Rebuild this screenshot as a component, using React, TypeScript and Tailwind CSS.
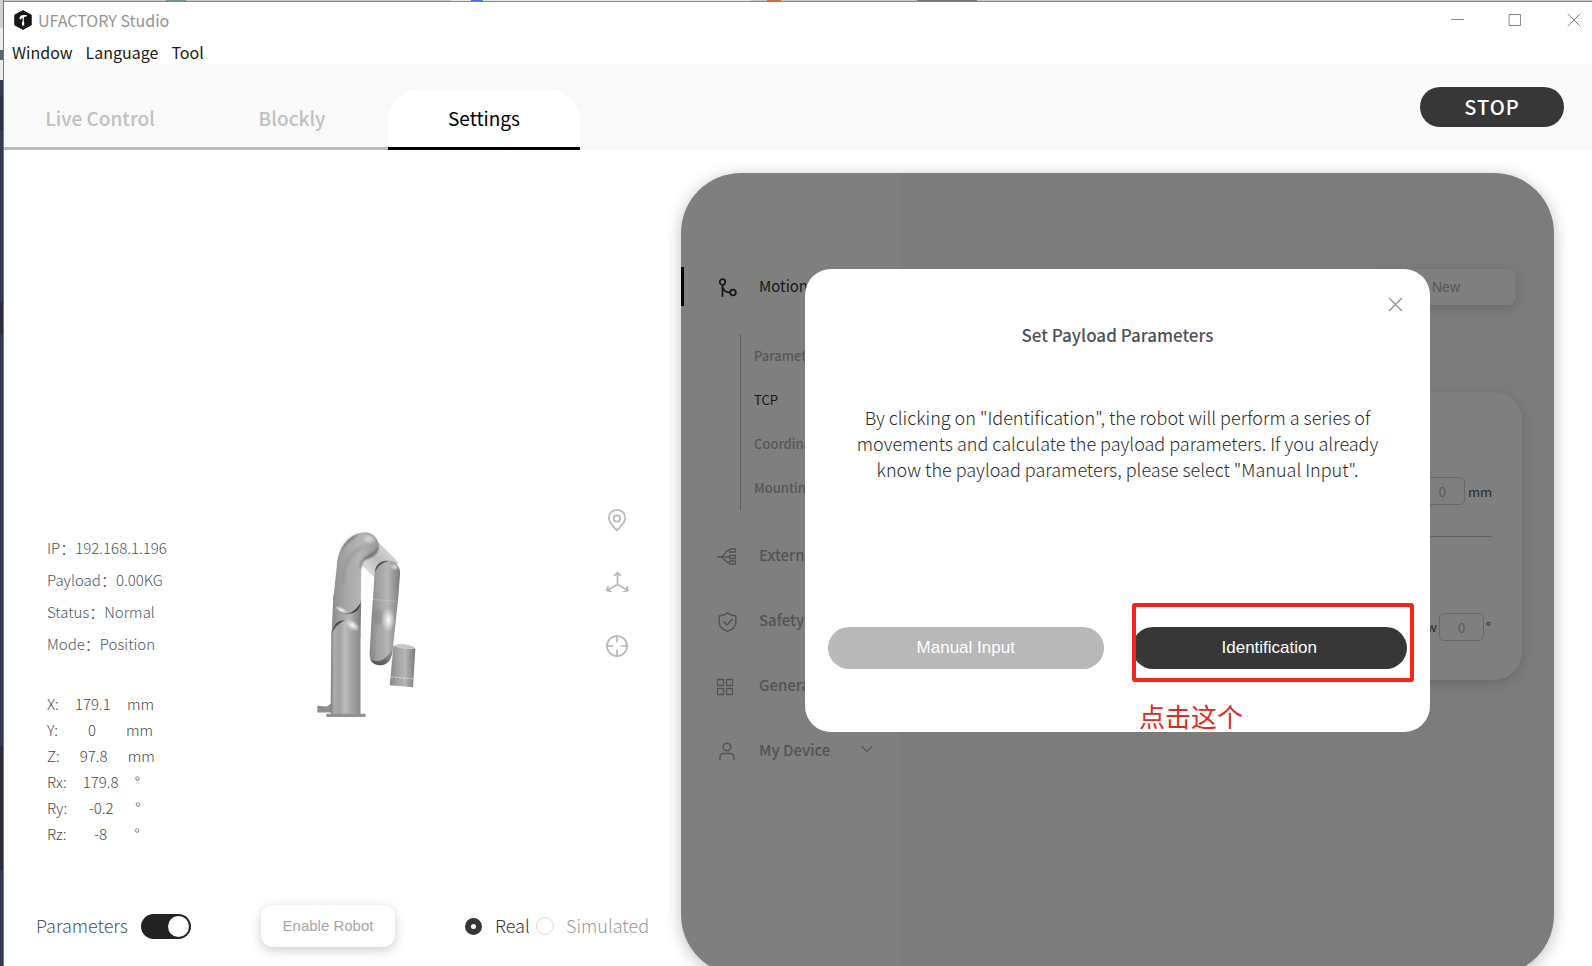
import type { ReactNode } from 'react';

const tabs = ['Live Control', 'Blockly'];

const status = ['IP：192.168.1.196', 'Payload：0.00KG', 'Status：Normal', 'Mode：Position'];

const pose = [
  { name: 'X:', value: '179.1', unit: 'mm' },
  { name: 'Y:', value: '0', unit: 'mm' },
  { name: 'Z:', value: '97.8', unit: 'mm' },
  { name: 'Rx:', value: '179.8', unit: '°' },
  { name: 'Ry:', value: '-0.2', unit: '°' },
  { name: 'Rz:', value: '-8', unit: '°' },
];

const motionItems = ['Parameters', 'TCP', 'Coordinate', 'Mounting'];

function Logo() {
  return (
    <svg width="20" height="20" viewBox="0 0 20 20" aria-hidden="true">
      <path d="M10 0.6 L18.2 5 V15 L10 19.4 L1.8 15 V5 Z" fill="#151515" stroke="#151515" strokeLinejoin="round" />
      <path d="M13.8 5 H10.6 C8 5 6.4 6.400 6.4 8.800 L8 9.600 C8.200 8.600 8.800 8 9.600 8 V11.600 L9 12.600 V15.400 H11.200 V12.600 L10.800 11.600 V8 C11 7 12 6.600 13.800 6.600 Z" fill="#fff" />
    </svg>
  );
}

function RobotArm() {
  return (
    <svg width="101" height="188" viewBox="108 93 304 564" role="img" aria-label="Robot arm">
      <defs>
        <linearGradient id="base" x1="0" x2="1">
          <stop offset="0" stopColor="#7d7d7d" />
          <stop offset="0.12" stopColor="#acacac" />
          <stop offset="0.3" stopColor="#a2a2a2" />
          <stop offset="0.48" stopColor="#bcbcbc" />
          <stop offset="0.7" stopColor="#a6a6a6" />
          <stop offset="1" stopColor="#868686" />
        </linearGradient>
        <linearGradient id="tube" x1="0" x2="1">
          <stop offset="0" stopColor="#858585" />
          <stop offset="0.3" stopColor="#a3a3a3" />
          <stop offset="0.6" stopColor="#b6b6b6" />
          <stop offset="1" stopColor="#7a7a7a" />
        </linearGradient>
        <linearGradient id="upper" x1="0" x2="1">
          <stop offset="0" stopColor="#909090" />
          <stop offset="0.3" stopColor="#a8a8a8" />
          <stop offset="0.6" stopColor="#b4b4b4" />
          <stop offset="1" stopColor="#969696" />
        </linearGradient>
        <linearGradient id="link" x1="0" y1="1" x2="1" y2="0">
          <stop offset="0" stopColor="#eeeeee" />
          <stop offset="0.5" stopColor="#bcbcbc" />
          <stop offset="1" stopColor="#ececec" />
        </linearGradient>
        <linearGradient id="under" x1="0" y1="0" x2="0" y2="1">
          <stop offset="0" stopColor="#555" stopOpacity="0" />
          <stop offset="1" stopColor="#3c3c3c" stopOpacity="0.8" />
        </linearGradient>
        <radialGradient id="shine">
          <stop offset="0" stopColor="#fff" stopOpacity="0.95" />
          <stop offset="1" stopColor="#fff" stopOpacity="0" />
        </radialGradient>
        <filter id="soft" x="-30%" y="-30%" width="160%" height="160%">
          <feGaussianBlur stdDeviation="4" />
        </filter>
      </defs>
      <path d="M240 190 L296 126 L356 186 L340 220 L288 236 Z" fill="url(#link)" />
      <path d="M112 618 L140 620 L156 610 V638 H112 Z" fill="#8f8f8f" />
      <path d="M160 285 L244 300 L242 410 L155 410 Z" fill="url(#tube)" />
      <path d="M154 400 C156 372 172 360 194 360 C220 360 240 380 242 404 V645 H152 Z" fill="url(#base)" />
      <path d="M156 398 C160 370 178 360 196 361 C180 368 168 378 156 398 Z" fill="#4c4c4c" />
      <ellipse cx="218" cy="376" rx="26" ry="14" fill="url(#shine)" transform="rotate(35 218 376)" />
      <path d="M139 642 H257 V652 H139 Z" fill="#929292" />
      <path d="M160 300 L172 184 C178 136 216 96 258 96 C280 97 297 116 297 138 C297 164 274 174 258 178 C248 182 245 200 244 220 L243 310 C238 330 224 342 204 342 L160 330 Z" fill="url(#upper)" />
      <path d="M188 250 C188 200 208 160 250 140" stroke="#8c8c8c" strokeWidth="10" fill="none" opacity="0.4" filter="url(#soft)" />
      <ellipse cx="268" cy="116" rx="24" ry="18" fill="url(#shine)" opacity="0.6" />
      <path d="M243 308 C240 330 224 342 204 341 C220 336 230 326 243 308 Z" fill="#404040" />
      <path d="M297 136 C297 166 268 172 250 182 C244 190 246 200 240 206 C240 184 250 174 262 166 C276 160 290 152 297 136 Z" fill="#505050" opacity="0.6" filter="url(#soft)" />
      <path d="M180 154 C190 126 214 104 238 100 C220 116 202 126 180 154 Z" fill="#5c5c5c" opacity="0.6" filter="url(#soft)" />
      <path d="M162 318 C176 336 192 342 206 341" stroke="#6c6c6c" strokeWidth="3" fill="none" />
      <ellipse cx="184" cy="330" rx="24" ry="9" fill="url(#shine)" transform="rotate(25 184 330)" />
      <path d="M285 215 C287 192 302 181 324 181 C346 182 362 196 361 220 L355 300 L346 380 L338 460 C332 486 320 497 300 496 C276 494 266 476 270 450 L276 340 L280 290 Z" fill="url(#tube)" />
      <path d="M285 216 C288 192 304 181 326 182 C306 188 294 198 285 216 Z" fill="#555" />
      <ellipse cx="345" cy="200" rx="16" ry="12" fill="url(#shine)" opacity="0.7" />
      <path d="M280 298 L355 304" stroke="#d8d8d8" strokeWidth="2" strokeDasharray="5 5" />
      <ellipse cx="294" cy="350" rx="14" ry="26" fill="#6c6c6c" opacity="0.25" filter="url(#soft)" />
      <ellipse cx="326" cy="360" rx="20" ry="36" fill="url(#shine)" />
      <path d="M340 440 C336 482 322 497 300 496 C286 496 276 490 270 478 C300 492 320 480 340 440 Z" fill="url(#under)" />
      <path d="M341 438 C360 430 396 434 407 446 L400 562 L330 556 Z" fill="url(#tube)" />
      <path d="M341 438 C360 430 396 434 407 446 C390 450 360 446 341 438 Z" fill="#c8c8c8" />
      <path d="M333 531 L403 537" stroke="#f4f4f4" strokeWidth="2" strokeDasharray="8 4" />
    </svg>
  );
}

function Glyph({ size = 24, width = 1, children }: { size?: number; width?: number; children: ReactNode }) {
  return (
    <svg width={size} height={size} viewBox={`0 0 ${size} ${size}`} fill="none" stroke="currentColor" strokeWidth={width} strokeLinecap="round" strokeLinejoin="round" aria-hidden="true">
      {children}
    </svg>
  );
}

function MenuItem({ icon, label, children }: { icon: ReactNode; label: string; children?: ReactNode }) {
  return (
    <button className="flex h-[65px] w-full items-center pt-[2px] pl-[34px] text-left text-[15px] font-medium text-[#a8a8a8]">
      <span className="mt-[2px] w-11">{icon}</span>
      <span className="w-[101px]">{label}</span>
      {children}
    </button>
  );
}

function RobotView() {
  return (
    <section className="flex flex-col justify-end pb-[19px]">
      <div className="flex items-end pb-[58px] pl-[43px]">
        <div className="w-[269px] text-[15px] font-light">
          <ul className="mb-[31px] text-[#4a5866]">
            {status.map((line) => (
              <li key={line} className="h-8 leading-8">{line}</li>
            ))}
          </ul>
          <ul className="text-[#4a4a4a]">
            {pose.map((row) => (
              <li key={row.name} className="flex h-[26px] leading-[26px]">
                <span>{row.name}</span>
                <span className="w-[68px] text-center">{row.value}</span>
                <span>{row.unit}</span>
              </li>
            ))}
          </ul>
        </div>
        <div className="mb-[128px]">
          <RobotArm />
        </div>
        <div className="mr-[52px] mb-[189px] ml-auto flex flex-col gap-[39px] text-[#b8b8b8]">
          <button aria-label="Position view">
            <Glyph width={1.7}>
              <path d="M12 22.5 C8 18 3.8 14.5 3.8 10 A8.2 8.2 0 0 1 20.2 10 C20.2 14.5 16 18 12 22.5 Z" />
              <circle cx="12" cy="10.5" r="3.2" />
            </Glyph>
          </button>
          <button aria-label="Axes view">
            <Glyph width={1.7}>
              <path d="M12.5 13.5 V1.5 M9.5 4.5 L12.5 1.5 L15.5 4.5 M12.5 13.5 L2 19.5 M3 15.5 L2 19.5 L6 20.5 M12.5 13.5 L23 19.5 M22 15.5 L23 19.5 L19 20.5" />
            </Glyph>
          </button>
          <button aria-label="Center view">
            <Glyph width={1.7}>
              <circle cx="12" cy="12" r="10" />
              <path d="M12 2 V7.5 M12 16.5 V22 M2 12 H7.5 M16.5 12 H22" />
            </Glyph>
          </button>
        </div>
      </div>
      <div className="flex h-[42px] items-center pl-8 text-lg font-light text-[#4a5866]">
        <label htmlFor="parameters" className="w-[105px] pb-[3px]">Parameters</label>
        <input
          id="parameters"
          type="checkbox"
          defaultChecked
          className="flex h-[25px] w-[50px] appearance-none items-center rounded-full bg-[#232323] px-[2px] before:size-[21px] before:rounded-full before:bg-white checked:justify-end"
        />
        <button className="ml-[70px] h-[42px] w-[134px] rounded-xl bg-white font-['Liberation_Sans',sans-serif] text-[15px] font-normal text-[#a6a6a6] shadow-[0_3px_12px_rgba(0,0,0,0.2)]">
          Enable Robot
        </button>
        <label className="ml-[70px] flex w-[71px] items-center gap-[13px] text-[#333]">
          <input type="radio" name="mode" defaultChecked className="size-[17px] appearance-none rounded-full border-[6px] border-[#363636] bg-white" />
          <span className="pb-[3px]">Real</span>
        </label>
        <label className="flex items-center gap-3 text-[#999]">
          <input type="radio" name="mode" className="size-[18px] appearance-none rounded-full border border-[#ddd] bg-white" />
          <span className="pb-[3px]">Simulated</span>
        </label>
      </div>
    </section>
  );
}

function SettingsNav() {
  return (
    <nav className="w-[219px] bg-white pt-[94px]">
      <button className="flex h-[39px] w-full items-center border-l-[3px] border-black pl-[34px] text-left text-[15px] text-[#333]">
        <span className="w-[41px] pt-[2px]">
          <Glyph size={20} width={1.8}>
            <circle cx="4.5" cy="4" r="2.8" />
            <circle cx="15" cy="14.5" r="2.8" />
            <path d="M4.5 7 V18 M4.5 9 C5.5 12.5 8 14.5 12 14.5" />
          </Glyph>
        </span>
        Motion
      </button>
      <ul className="mt-7 mb-3 ml-[59px] border-l border-[#c4c4c4] pl-[13px] text-[13px]">
        {motionItems.map((item) => (
          <li key={item} className="flex h-11 items-center">
            <a href="#" className={item === 'TCP' ? 'text-[#333]' : 'font-medium text-[#b0b0b0]'}>{item}</a>
          </li>
        ))}
      </ul>
      <MenuItem
        label="External"
        icon={
          <Glyph width={1.3}>
            <path d="M2.5 12 H14 M6.5 12 L12.5 5.5 H14 M6.5 12 L12.5 17.5 H14" />
            <path d="M14.5 4 H20.5 V7 H14.5 Z M14.5 10.5 H20.5 V13.5 H14.5 Z M14.5 16 H20.5 V19 H14.5 Z" />
          </Glyph>
        }
      />
      <MenuItem
        label="Safety"
        icon={
          <Glyph width={1.5}>
            <path d="M12.5 2.8 C15 4.8 18 5.6 20.8 5.8 V12 C20.8 17 17 19.8 12.5 21.2 C8 19.8 4.2 17 4.2 12 V5.8 C7 5.6 10 4.8 12.5 2.8 Z" />
            <path d="M9 12 L12 15 L17 9.5" />
          </Glyph>
        }
      />
      <MenuItem
        label="General"
        icon={
          <Glyph width={1.3}>
            <path d="M2.5 4.5 H8.5 V10.5 H2.5 Z M11.5 4.5 H17.5 V10.5 H11.5 Z M2.5 13.5 H8.5 V19.5 H2.5 Z M11.5 13.5 H17.5 V19.5 H11.5 Z" />
          </Glyph>
        }
      />
      <MenuItem
        label="My Device"
        icon={
          <Glyph width={1.5}>
            <circle cx="12" cy="7" r="3.8" />
            <path d="M5 19.5 V17 A3.5 3.5 0 0 1 8.5 13.5 H15.5 A3.5 3.5 0 0 1 19 17 V19.5" />
          </Glyph>
        }
      >
        <span className="pb-[2px] text-[#707070]">
          <Glyph size={14}>
            <path d="M2 3.5 L7 8.5 L12 3.5" />
          </Glyph>
        </span>
      </MenuItem>
    </nav>
  );
}

function TcpContent() {
  const field = 'rounded-[5px] border border-[#d4d4d8] bg-transparent text-center text-[13px] text-[#b4b4b8]';
  return (
    <div className="flex flex-1 flex-col bg-[#f8f8f8] pt-24 pr-8 pl-8">
      <button className="mr-1.5 h-9 w-[140px] self-end rounded-lg bg-white font-['Liberation_Sans',sans-serif] text-sm text-[#b0b0b0] shadow-[0_3px_12px_rgba(0,0,0,0.15)]">
        New
      </button>
      <div className="mt-[87px] h-[288px] rounded-[28px] bg-white px-[30px] text-[13px] text-[#555] shadow-[0_3px_12px_rgba(0,0,0,0.15)]">
        <div className="flex h-[145px] items-end justify-end gap-[3px] border-b border-[#c4c4c4] pb-[31px]">
          <input id="z-offset" defaultValue="0" className={`h-7 w-[45px] ${field}`} />
          <label htmlFor="z-offset" className="leading-[26px]">mm</label>
        </div>
        <div className="flex h-[104px] items-end justify-end gap-[2px]">
          <label htmlFor="yaw" className="leading-7">Yaw</label>
          <input id="yaw" defaultValue="0" className={`h-7 w-[45px] ${field}`} />
          <span className="w-[6px] leading-7">°</span>
        </div>
      </div>
    </div>
  );
}

function PayloadDialog() {
  return (
    <div role="dialog" aria-labelledby="dialog-title" className="relative flex h-[463px] w-[625px] flex-col rounded-[26px] bg-white px-[23px] pt-6">
      <button aria-label="Close" className="self-end text-[#8c8c8c]">
        <Glyph size={22} width={1.2}>
          <path d="M4.5 5.5 L16.5 17.5 M16.5 5.5 L4.5 17.5" />
        </Glyph>
      </button>
      <h2 id="dialog-title" className="mt-[7px] text-center text-[17px] leading-[26px] font-medium text-[#4d5258]">Set Payload Parameters</h2>
      <p className="mt-14 px-5 text-center text-lg leading-[26px] font-light text-[#2b2b2b]">
        By clicking on "Identification", the robot will perform a series of movements and calculate the payload parameters. If you already know the payload parameters, please select "Manual Input".
      </p>
      <div className="mt-auto mb-[63px] flex gap-7 font-['Liberation_Sans',sans-serif] text-[17px] text-white">
        <button className="h-[42px] flex-1 rounded-full bg-[#b8b8b8]">Manual Input</button>
        <button className="h-[42px] flex-1 rounded-full bg-[#373737]">Identification</button>
      </div>
      <div className="absolute right-4 bottom-[50px] h-[79px] w-[282px] rounded-[3px] border-4 border-[#fa2316]" />
      <div className="absolute bottom-0 left-[334px] text-[26px] leading-8 text-[#e02b20]">点击这个</div>
    </div>
  );
}

export default function App() {
  return (
    <div className="flex h-screen overflow-hidden bg-white font-['Noto_Sans_CJK_SC','Noto_Sans',sans-serif]">
      <div className="flex w-1 shrink-0 flex-col overflow-hidden border-r border-[#777] bg-[#333b52]">
        <div className="h-7 bg-[#cfcfd1]" />
        <div className="h-[22px] bg-[#ececec]" />
        <div className="h-[10px] bg-[#626568]" />
        <div className="h-5 bg-[#ececec]" />
        <div className="mt-4 h-[34px] bg-[#2b3042]" />
        <div className="mt-[172px] h-8 bg-[#2a2e3b]" />
        <div className="mt-[412px] h-[124px] bg-[#2a2c36]" />
      </div>
      <div className="flex min-w-0 flex-1 flex-col">
        <div className="flex h-[2px] shrink-0 border-b border-[#888] bg-[#c9c9c9]">
          <div className="ml-[162px] w-[20px] bg-[#6c998c]" />
          <div className="ml-[265px] w-[300px] bg-[#e8e8e8] pl-[20px]">
            <div className="h-full w-[12px] bg-[#3d74d8]" />
          </div>
          <div className="ml-[16px] w-[14px] bg-[#c96a40]" />
          <div className="ml-[136px] w-[60px] bg-[#777]" />
        </div>
        <header className="flex h-9 shrink-0 items-center pl-[9px]">
          <Logo />
          <h1 className="ml-[5px] text-base text-[#949494]">UFACTORY Studio</h1>
          <div className="ml-auto flex gap-[42px] pr-[10px] text-[#8a8a8a]">
            <button aria-label="Minimize">
              <Glyph size={16}><path d="M1.5 7.5 H13.5" /></Glyph>
            </button>
            <button aria-label="Maximize">
              <Glyph size={16}><path d="M1.5 2.5 H12.5 V13.5 H1.5 Z" /></Glyph>
            </button>
            <button aria-label="Close window">
              <Glyph size={16}><path d="M2 2 L14 14 M14 2 L2 14" /></Glyph>
            </button>
          </div>
        </header>
        <div className="flex h-[26px] shrink-0 items-center gap-[13px] pt-[2px] pl-2 text-base text-[#1a1a1a]">
          <button>Window</button>
          <button>Language</button>
          <button>Tool</button>
        </div>
        <div className="flex h-[86px] shrink-0 items-end bg-[#f9f9f9] text-[19px]">
          {tabs.map((tab) => (
            <button key={tab} className="h-[60px] w-48 border-b-[3px] border-[#bbb] font-medium text-[#c0c0c0]">{tab}</button>
          ))}
          <button className="h-[60px] w-48 overflow-hidden rounded-t-[30px] border-b-[3px] border-black bg-white text-black">Settings</button>
          <button className="mr-7 mb-[23px] ml-auto h-10 w-36 rounded-full bg-[#373737] text-xl font-medium tracking-wider text-white">STOP</button>
        </div>
        <main className="grid min-h-0 flex-1 grid-cols-[677fr_911fr]">
          <RobotView />
          <div className="-mb-[9px] pt-[23px] pr-[38px]">
            <div className="relative flex h-full overflow-hidden rounded-[60px] shadow-[0_3px_16px_rgba(0,0,0,0.25)]">
              <SettingsNav />
              <TcpContent />
              <div className="absolute inset-0 flex items-start justify-center bg-black/50 pt-24">
                <PayloadDialog />
              </div>
            </div>
          </div>
        </main>
      </div>
    </div>
  );
}
